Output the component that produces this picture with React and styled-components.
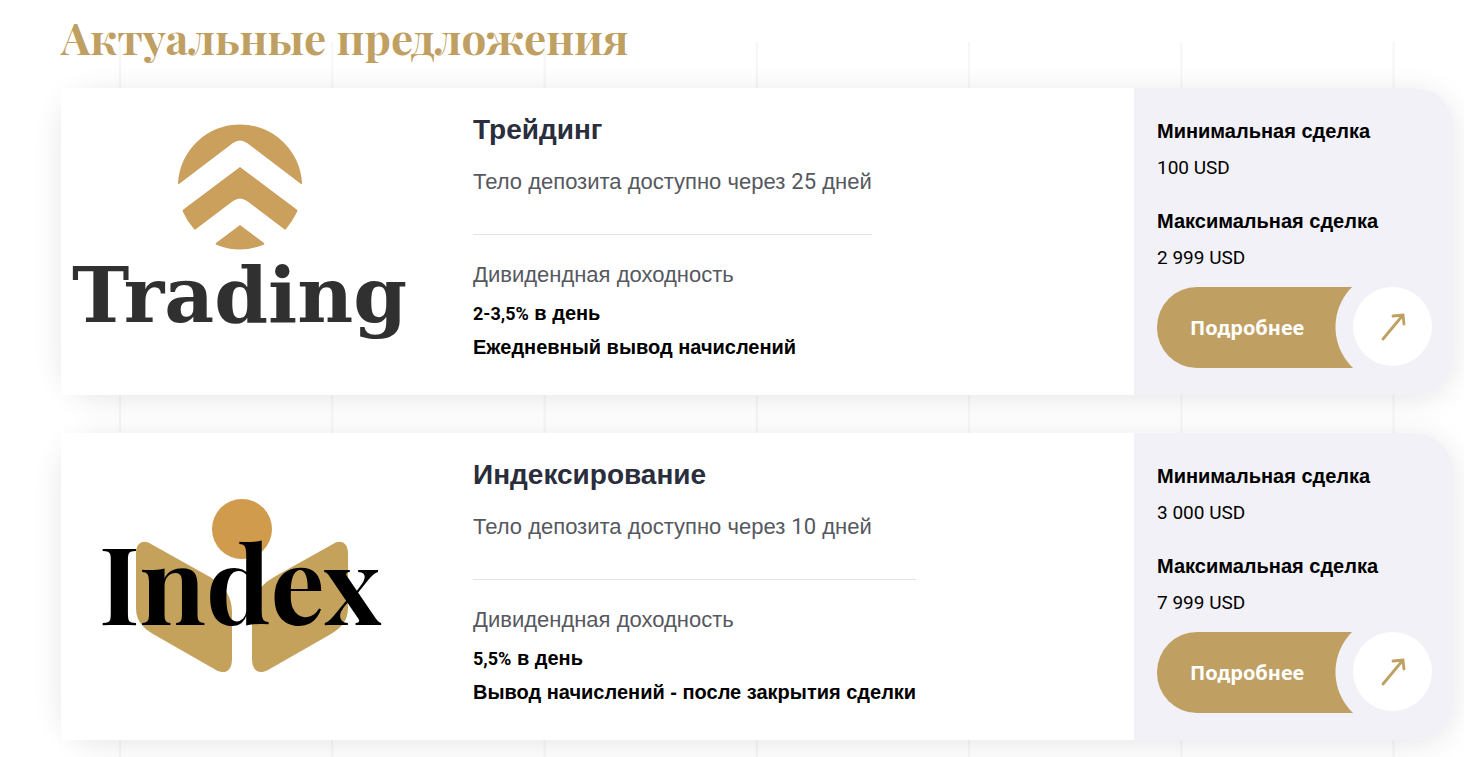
import React from 'react';
import styled, { createGlobalStyle } from 'styled-components';

const theme = {
  gold: '#bfa062',
  heading: '#2a2d3b',
  text: '#565860',
  panel: '#f2f1f7',
  line: '#e3e3e3',
  radius: '40px',
};

const GlobalStyle = createGlobalStyle`
  *, *::before, *::after {
    box-sizing: border-box;
  }
  body {
    margin: 0;
    background: #fff;
    color: #000;
    font-family: "Liberation Sans", Arial, sans-serif;
  }
  h1, h2, p, dl, dd {
    margin: 0;
  }
`;

const Page = styled.main`
  min-height: 100vh;
  padding: 7px 10px 17px 61px;
  overflow: hidden;
  background-image: linear-gradient(to right, #f6f6f6 2px, transparent 2px);
  background-size: 14.5vw 100%;
  background-position: 119px 42px;
  background-repeat: repeat-x;
`;

const PageTitle = styled.h1`
  color: ${theme.gold};
  font-family: "Playfair Display", "Liberation Serif", serif;
  font-size: 44px;
  line-height: 60px;
  font-weight: 700;
`;

const OfferList = styled.div`
  display: flex;
  flex-direction: column;
  gap: 38px;
  margin-top: 21px;
`;

const Card = styled.article`
  display: flex;
  border-radius: ${theme.radius};
  background: #fff;
  box-shadow: 0 4px 30px rgba(0, 0, 0, 0.1);
`;

const LogoBox = styled.div`
  flex: 0 0 372px;
  background: #fff;
  > svg {
    display: block;
    width: 100%;
  }
`;

const Info = styled.div`
  flex: 1;
  padding: 24px 40px;
`;

const InfoContent = styled.div`
  width: fit-content;
`;

const OfferTitle = styled.h2`
  color: ${theme.heading};
  font-size: 28px;
  line-height: 36px;
`;

const Lead = styled.p`
  color: ${theme.text};
  font-size: 22px;
  line-height: 32px;
`;

const Term = styled(Lead)`
  margin-top: 18px;
  padding-bottom: 36px;
  border-bottom: 1px solid ${theme.line};
`;

const YieldLabel = styled(Lead)`
  margin-top: 24px;
`;

const Strong = styled.p`
  font-size: 20px;
  line-height: 34px;
  font-weight: 700;
`;

const YieldValue = styled(Strong)`
  margin-top: 5px;
`;

const Num = styled.span`
  font-family: Roboto, sans-serif;
  font-size: ${props => props.$size};
  line-height: 1;
`;

const Side = styled.aside`
  flex: 0 0 320px;
  padding: 24px 22px 27px 23px;
  border-radius: 0 ${theme.radius} ${theme.radius} 0;
  background: ${theme.panel};
`;

const Limits = styled.dl`
  > dt {
    font-size: 20px;
    line-height: 38px;
    font-weight: 700;
  }
  > dd {
    font-family: Roboto, sans-serif;
    font-size: 19px;
    line-height: 36px;
  }
  > dd + dt {
    margin-top: 16px;
  }
`;

const MoreLink = styled.a`
  display: flex;
  margin-top: 11px;
  color: #fff;
  font-family: "Noto Sans", sans-serif;
  font-size: 20px;
  font-weight: 700;
  text-decoration: none;
`;

const MoreLabel = styled.span`
  display: flex;
  align-items: center;
  width: 196px;
  height: 81px;
  padding-left: 33px;
  border-radius: 40px 0 0 40px;
  background: radial-gradient(circle at 235px 40px, transparent 56px, ${theme.gold} 57px);
`;

const MoreArrow = styled.span`
  display: flex;
  align-items: center;
  justify-content: center;
  width: 79px;
  height: 79px;
  border-radius: 50%;
  background: #fff;
`;

const TradingLogo = () => (
  <svg viewBox="0 0 372 306" role="img" aria-label="Trading">
    <g fill="#cb9f5c">
      <path d="M118 96 Q117 97 117 95 A62.1 62.1 0 0 1 241 95 Q241 97 240 96 L186 55 Q179 50 172 55 Z" />
      <path d="M179 79 L235 121 Q237 122 236 124 Q231 134 225 141 Q224 142 223 141 L186 113 Q179 108 172 113 L135 141 Q134 142 133 141 Q126 133 122 124 Q121 122 123 121 Z" />
      <path d="M179 137 L203 155 Q204 156 202 157 Q179 166 156 157 Q154 156 155 155 Z" />
    </g>
    <text x="11" y="234" fill="#303030" fontFamily="DejaVu Serif, serif" fontSize="77" fontWeight="700">Trading</text>
  </svg>
);

const Wing = props => (
  <path
    d="M75 120 C75 110 82 106 90 111 L149 144 C164 153 171 164 171 179 V226 C171 238 164 242 155 237 L92 201 C80 194 75 186 75 175 Z"
    fill="#c5a25c"
    {...props}
  />
);

const IndexLogo = () => (
  <svg viewBox="0 0 372 306" role="img" aria-label="Index">
    <circle cx="181" cy="96" r="30" fill="#d09b4c" />
    <Wing />
    <Wing transform="translate(362 0) scale(-1 1)" />
    <text x="38" y="192" fontFamily="Playfair Display, Liberation Serif, serif" fontSize="108" fontWeight="700">Index</text>
  </svg>
);

const ArrowIcon = () => (
  <svg width="26" height="30" viewBox="0 0 26 30" fill="none" stroke={theme.gold} strokeWidth="2.8" strokeLinecap="round" aria-hidden="true">
    <path d="M3 27 L23 3 M13 4 L23 3 L24 12" />
  </svg>
);

const offers = [
  {
    id: 'trading',
    logo: <TradingLogo />,
    title: 'Трейдинг',
    days: '25',
    rate: '2-3,5%',
    payout: 'Ежедневный вывод начислений',
    min: '100 USD',
    max: '2 999 USD',
  },
  {
    id: 'index',
    logo: <IndexLogo />,
    title: 'Индексирование',
    days: '10',
    rate: '5,5%',
    payout: 'Вывод начислений - после закрытия сделки',
    min: '3 000 USD',
    max: '7 999 USD',
  },
];

const Offer = ({ offer }) => (
  <Card>
    <LogoBox>{offer.logo}</LogoBox>
    <Info>
      <InfoContent>
        <OfferTitle>{offer.title}</OfferTitle>
        <Term>Тело депозита доступно через <Num $size="22px">{offer.days}</Num> дней</Term>
        <YieldLabel>Дивидендная доходность</YieldLabel>
        <YieldValue><Num $size="18px">{offer.rate}</Num> в день</YieldValue>
        <Strong>{offer.payout}</Strong>
      </InfoContent>
    </Info>
    <Side>
      <Limits>
        <dt>Минимальная сделка</dt>
        <dd>{offer.min}</dd>
        <dt>Максимальная сделка</dt>
        <dd>{offer.max}</dd>
      </Limits>
      <MoreLink href={`#${offer.id}`}>
        <MoreLabel>Подробнее</MoreLabel>
        <MoreArrow><ArrowIcon /></MoreArrow>
      </MoreLink>
    </Side>
  </Card>
);

const App = () => (
  <>
    <GlobalStyle />
    <Page>
      <PageTitle>Актуальные предложения</PageTitle>
      <OfferList>
        {offers.map(offer => <Offer key={offer.id} offer={offer} />)}
      </OfferList>
    </Page>
  </>
);

export default App;
